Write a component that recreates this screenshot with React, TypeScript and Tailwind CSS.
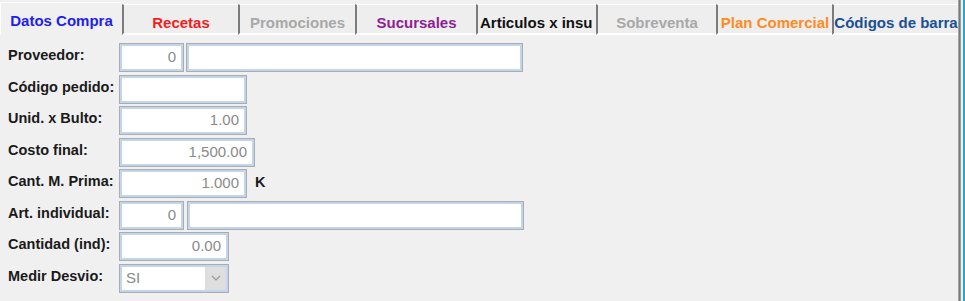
const TABS = [
  { label: "Datos Compra", w: "w-[122px]", color: "text-[#1e1ef0]", active: true },
  { label: "Recetas", w: "w-[116px]", color: "text-[#f01e1e]" },
  { label: "Promociones", w: "w-[117px]", color: "text-[#a8a8a8]" },
  { label: "Sucursales", w: "w-[121px]", color: "text-[#8e1e96]" },
  { label: "Articulos x insu", w: "w-[120px]", color: "text-[#111111]", clip: true },
  { label: "Sobreventa", w: "w-[120px]", color: "text-[#a8a8a8]" },
  { label: "Plan Comercial", w: "w-[116px]", color: "text-[#ff8a1e]" },
  { label: "Códigos de barra", w: "w-[126px]", color: "text-[#1b4f96]" },
];

const font = "font-['Liberation_Sans',Arial,sans-serif]";

function Box({ w, value = "" }: { w: string; value?: string }) {
  return (
    <div
      className={`${w} h-[29px] shrink-0 border border-[#a9adb3] bg-white shadow-[inset_0_0_0_2px_#c3d5ea] flex items-center justify-end pr-[7px] text-[15px] text-[#8a8a8a]`}
    >
      {value}
    </div>
  );
}

function Row({ label, children }: { label: string; children: React.ReactNode }) {
  return (
    <div className="flex items-center h-[29px]">
      <div className="w-[111px] shrink-0 text-[14.5px] font-bold text-[#1a1a1a] -mt-[3px]">{label}</div>
      {children}
    </div>
  );
}

export default function App() {
  return (
    <div className={`w-[965px] h-[301px] bg-[#f0f0f0] flex overflow-hidden ${font}`}>
      <div className="w-[958px] flex flex-col">
        <div className="h-[35px] flex items-end">
          {TABS.map((t, i) => (
            <div
              key={i}
              className={`${t.w} shrink-0 flex overflow-hidden whitespace-nowrap text-[15px] font-bold ${t.color} ${
                t.active
                  ? "h-[33px] items-start pt-[7px] justify-center border-t border-l border-white bg-[#f0f0f0]"
                  : `h-[31px] items-start pt-[7px] border-t border-b-2 border-t-white border-b-white bg-[#eeeeee] border-l-2 border-l-[#7c7c7c] ${
                      t.clip ? "justify-start pl-[2px]" : "justify-center"
                    }`
              }`}
            >
              {t.label}
            </div>
          ))}
        </div>
        <div className="flex flex-col gap-[2.5px] pt-[8px] pl-[8px]">
          <Row label="Proveedor:">
            <Box w="w-[65px]" value="0" />
            <Box w="w-[337px] ml-[2px]" />
          </Row>
          <Row label="Código pedido:">
            <Box w="w-[128px]" />
          </Row>
          <Row label="Unid. x Bulto:">
            <Box w="w-[128px]" value="1.00" />
          </Row>
          <Row label="Costo final:">
            <Box w="w-[136px]" value="1,500.00" />
          </Row>
          <Row label="Cant. M. Prima:">
            <Box w="w-[128px]" value="1.000" />
            <span className="ml-[8px] text-[14.5px] font-bold text-[#1a1a1a] -mt-[2px]">K</span>
          </Row>
          <Row label="Art. individual:">
            <Box w="w-[65px]" value="0" />
            <Box w="w-[337px] ml-[3px]" />
          </Row>
          <Row label="Cantidad (ind):">
            <Box w="w-[110px]" value="0.00" />
          </Row>
          <Row label="Medir Desvio:">
            <div className="w-[110px] h-[29px] shrink-0 border border-[#a9adb3] bg-white shadow-[inset_0_0_0_2px_#c3d5ea] flex p-[2px]">
              <div className="flex-1 flex items-center pl-[4px] text-[15px] text-[#8a8a8a]">SI</div>
              <div className="w-[21px] bg-[#dedede] flex items-center justify-center">
                <svg width="10" height="6" viewBox="0 0 10 6" fill="none">
                  <path d="M1 1l4 4 4-4" stroke="#9a9a9a" strokeWidth="1.2" />
                </svg>
              </div>
            </div>
          </Row>
        </div>
      </div>
      <div className="w-[1px] bg-[#a4a4a4]" />
      <div className="w-[1px] bg-[#7a7a7a]" />
      <div className="w-[1px] bg-[#9c9c9c]" />
      <div className="w-[2px] bg-[#f0f0f0]" />
      <div className="w-[2px] bg-[#2aa3d6]" />
    </div>
  );
}
